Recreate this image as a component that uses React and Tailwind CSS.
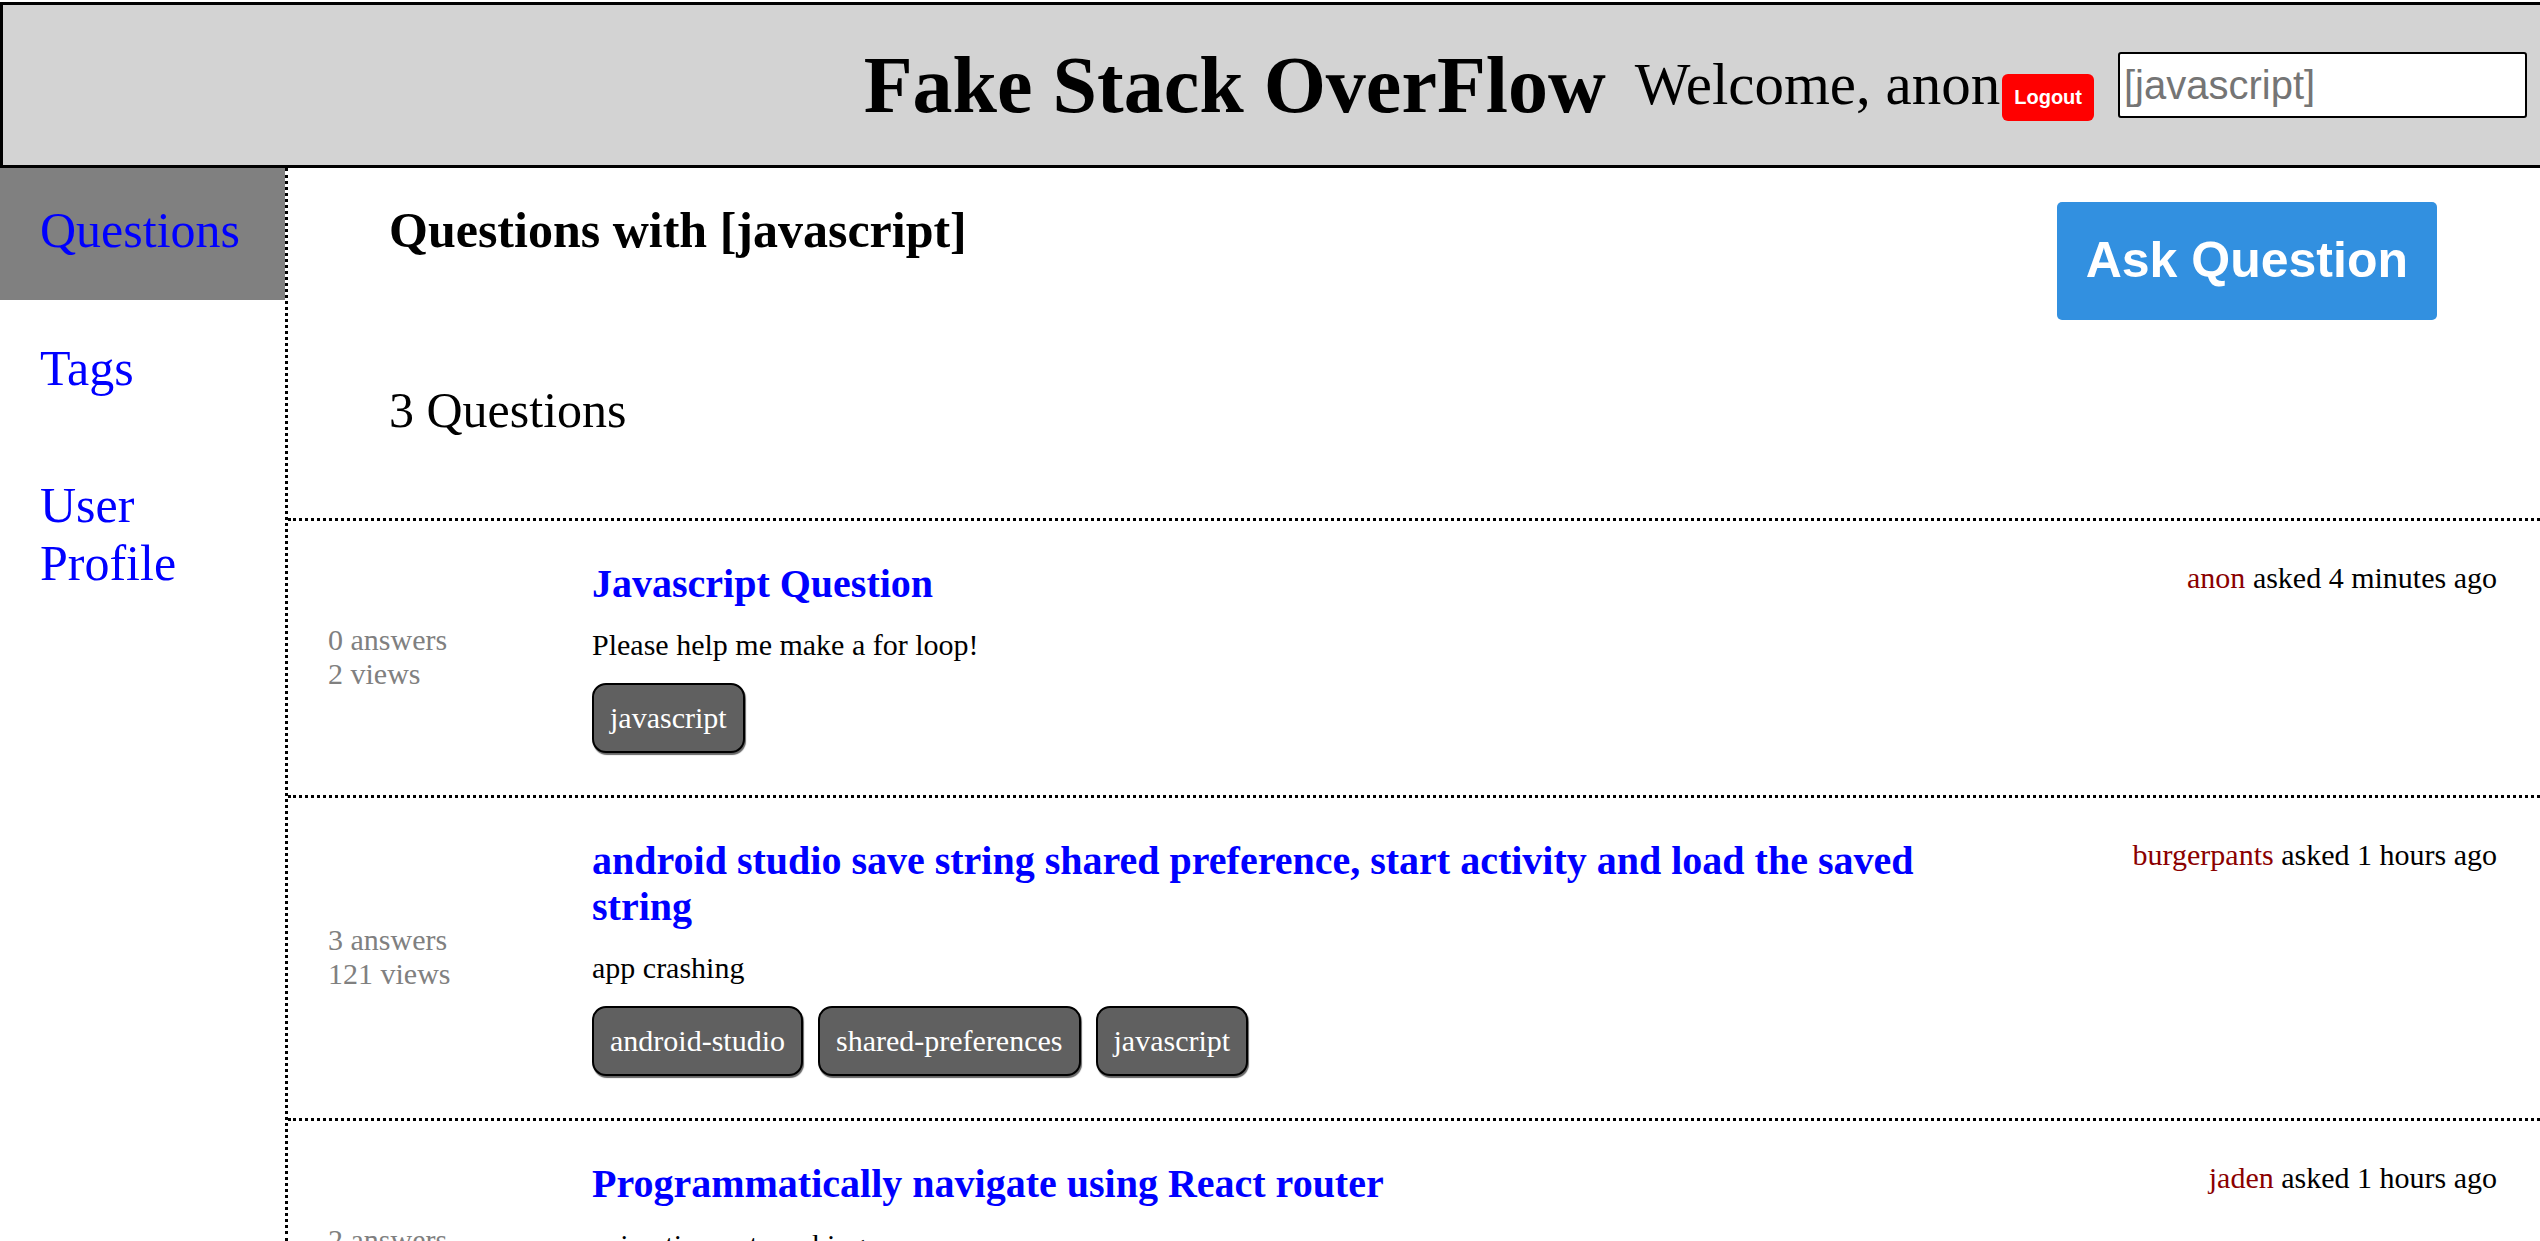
import { useState } from 'react';

const questions = [
  {
    id: 1,
    title: 'Javascript Question',
    text: 'Please help me make a for loop!',
    tags: ['javascript'],
    answers: 0,
    views: 2,
    askedBy: 'anon',
    askedAt: '4 minutes ago',
  },
  {
    id: 2,
    title: 'android studio save string shared preference, start activity and load the saved string',
    text: 'app crashing',
    tags: ['android-studio', 'shared-preferences', 'javascript'],
    answers: 3,
    views: 121,
    askedBy: 'burgerpants',
    askedAt: '1 hours ago',
  },
  {
    id: 3,
    title: 'Programmatically navigate using React router',
    text: 'animation not working',
    tags: ['react', 'javascript'],
    answers: 2,
    views: 10,
    askedBy: 'jaden',
    askedAt: '1 hours ago',
  },
];

function Header({ search, setSearch }) {
  return (
    <header className="mt-[2px] flex h-[166px] shrink-0 items-center justify-end border-y-[3px] border-l-[3px] border-black bg-[#d3d3d3] pr-[13px]">
      <h1 className="mr-[29px] text-[80px] font-bold leading-[92px]">Fake Stack OverFlow</h1>
      <div className="flex items-baseline">
        <span className="text-[59px] leading-[68px]">Welcome, anon</span>
        <button
          type="button"
          className="ml-[2px] rounded-[6px] bg-[#ff0000] px-[12px] py-[12px] font-['Liberation_Sans',Arial,sans-serif] text-[20px] font-bold leading-[23px] text-white"
        >
          Logout
        </button>
      </div>
      <input
        type="text"
        value={search}
        onChange={(event) => setSearch(event.target.value)}
        className="ml-[24px] h-[66px] w-[409px] rounded-[3px] border-2 border-black bg-white px-[4px] font-['Liberation_Sans',Arial,sans-serif] text-[40px] text-[#757575] outline-none"
      />
    </header>
  );
}

function Sidebar() {
  const items = [
    { label: 'Questions', active: true },
    { label: 'Tags', active: false },
    { label: 'User Profile', active: false },
  ];

  return (
    <nav className="w-[288px] shrink-0 border-r-[3px] border-dotted border-black">
      {items.map((item) => (
        <a
          key={item.label}
          href="#"
          className={`mb-[6px] block pb-[40px] pl-[40px] pr-[20px] pt-[34px] text-[50px] leading-[57.5px] text-[#0000ff] ${
            item.active ? 'bg-[#808080]' : ''
          }`}
        >
          {item.label}
        </a>
      ))}
    </nav>
  );
}

function QuestionRow({ question }) {
  return (
    <div className="flex border-b-[3px] border-dotted border-black pb-[42px] pl-[40px] pr-[43px] pt-[40px]">
      <div className="w-[264px] shrink-0 self-center text-[30px] leading-[34.5px] text-[#808080]">
        <p>{question.answers} answers</p>
        <p>{question.views} views</p>
      </div>
      <div className="w-[1380px] shrink-0">
        <a href="#" className="block text-[40px] font-bold leading-[46px] text-[#0000ff]">
          {question.title}
        </a>
        <p className="mt-[21px] text-[30px] leading-[34.5px]">{question.text}</p>
        <div className="mt-[20px] flex gap-[15px]">
          {question.tags.map((tag) => (
            <button
              key={tag}
              type="button"
              className="rounded-[14px] border-2 border-black bg-[#606060] px-[16px] py-[16px] text-[30px] leading-[34.5px] text-white shadow-[1px_2px_1px_rgba(0,0,0,0.6)]"
            >
              {tag}
            </button>
          ))}
        </div>
      </div>
      <div className="flex-1 text-right text-[30px] leading-[34.5px]">
        <span className="text-[#8b0000]">{question.askedBy}</span> asked {question.askedAt}
      </div>
    </div>
  );
}

export default function App() {
  const [search, setSearch] = useState('[javascript]');

  return (
    <div className="flex h-screen flex-col overflow-hidden bg-white font-['Liberation_Serif','Times_New_Roman',serif] text-black">
      <Header search={search} setSearch={setSearch} />
      <div className="flex min-h-0 flex-1">
        <Sidebar />
        <main className="min-w-0 flex-1 overflow-hidden">
          <div className="border-b-[3px] border-dotted border-black pb-[79px] pl-[101px] pr-[103px] pt-[34px]">
            <div className="flex items-start justify-between">
              <h2 className="text-[50px] font-bold leading-[57.5px]">Questions with {search}</h2>
              <button
                type="button"
                className="rounded-[5px] bg-[#3290e0] px-[29px] py-[30px] font-['Liberation_Sans',Arial,sans-serif] text-[50px] font-bold leading-[57.5px] text-white"
              >
                Ask Question
              </button>
            </div>
            <p className="mt-[62px] text-[50px] leading-[57.5px]">{questions.length} Questions</p>
          </div>
          {questions.map((question) => (
            <QuestionRow key={question.id} question={question} />
          ))}
        </main>
      </div>
    </div>
  );
}
